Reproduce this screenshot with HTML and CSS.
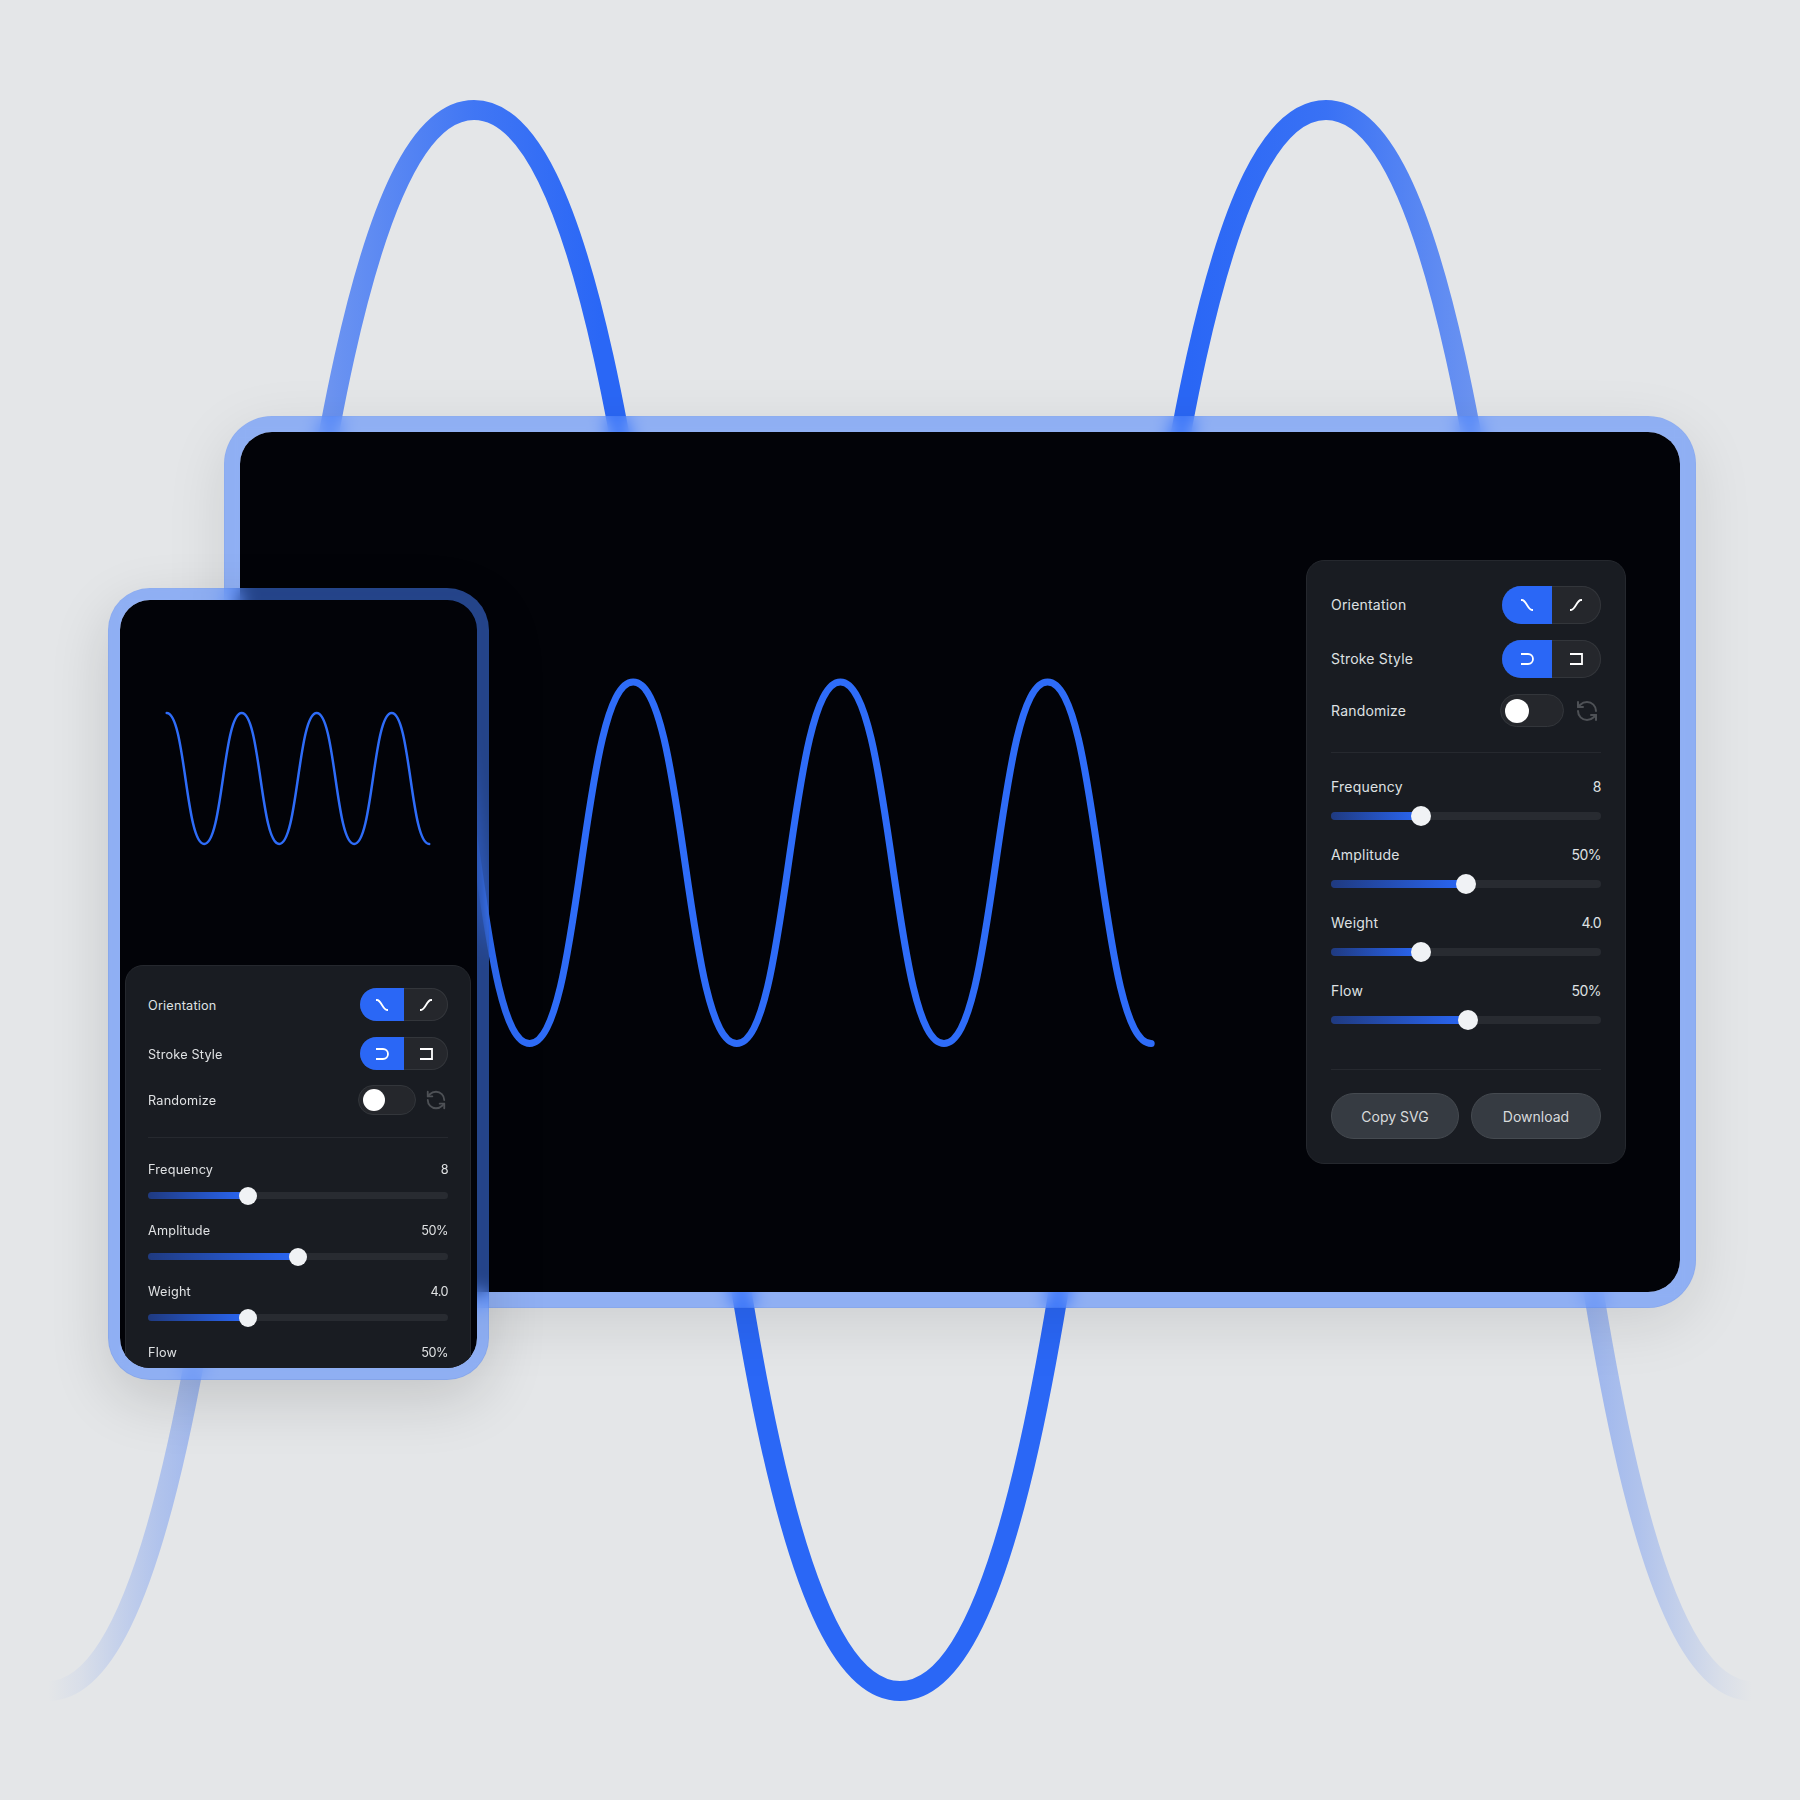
FILE: index.html
```html
<!DOCTYPE html>
<html lang="en">
<head>
    <meta charset="UTF-8">
    <meta name="viewport" content="width=device-width, initial-scale=1.0">
    <title>Wave Generator</title>
    <link rel="stylesheet" href="styles.css">
</head>
<body>

    <svg class="wave-back" viewBox="0 0 1800 1800" fill="none">
        <defs>
            <linearGradient id="waveFade" gradientUnits="userSpaceOnUse" x1="48" y1="0" x2="1752" y2="0">
                <stop offset="0" stop-color="#2a67f6" stop-opacity="0"/>
                <stop offset="0.019" stop-color="#2a67f6" stop-opacity="0.06"/>
                <stop offset="0.042" stop-color="#2a67f6" stop-opacity="0.17"/>
                <stop offset="0.066" stop-color="#2a67f6" stop-opacity="0.28"/>
                <stop offset="0.089" stop-color="#2a67f6" stop-opacity="0.36"/>
                <stop offset="0.17" stop-color="#2a67f6" stop-opacity="0.66"/>
                <stop offset="0.25" stop-color="#2a67f6" stop-opacity="0.88"/>
                <stop offset="0.324" stop-color="#2a67f6"/>
                <stop offset="0.67" stop-color="#2a67f6"/>
                <stop offset="0.75" stop-color="#2a67f6" stop-opacity="0.92"/>
                <stop offset="0.834" stop-color="#2a67f6" stop-opacity="0.66"/>
                <stop offset="0.911" stop-color="#2a67f6" stop-opacity="0.36"/>
                <stop offset="0.934" stop-color="#2a67f6" stop-opacity="0.28"/>
                <stop offset="0.958" stop-color="#2a67f6" stop-opacity="0.17"/>
                <stop offset="0.982" stop-color="#2a67f6" stop-opacity="0.06"/>
                <stop offset="1" stop-color="#2a67f6" stop-opacity="0"/>
            </linearGradient>
        </defs>
        <path d="M48 1691 C272 1691 250 110 474 110 S676 1691 900 1691 S1102 110 1326 110 S1528 1691 1752 1691" stroke="url(#waveFade)" stroke-width="20"/>
    </svg>

    <!-- desktop window -->
    <section class="frame frame-desktop">
        <svg class="wave-desktop" viewBox="0 0 1440 860" fill="none">
            <path d="M186 250 C237.8 250 237.8 611.5 289.6 611.5 S341.4 250 393.2 250 S445 611.5 496.8 611.5 S548.6 250 600.4 250 S652.2 611.5 704 611.5 S755.8 250 807.6 250 S859.4 611.5 911.2 611.5" stroke="#2e6cf8" stroke-width="7" stroke-linecap="round"/>
        </svg>

        <div class="panel">
            <div class="row">
                <span class="label">Orientation</span>
                <div class="seg">
                    <button class="seg-btn active" type="button"><svg class="seg-icon" viewBox="0 0 14 12"><path d="M1 1 H2 C6 1 8 11 12 11 H13"/></svg></button>
                    <button class="seg-btn" type="button"><svg class="seg-icon" viewBox="0 0 14 12"><path d="M1 11 H2 C6 11 8 1 12 1 H13"/></svg></button>
                </div>
            </div>
            <div class="row">
                <span class="label">Stroke Style</span>
                <div class="seg">
                    <button class="seg-btn active" type="button"><svg class="seg-icon" viewBox="0 0 14 12"><path d="M1 1 H8 A5 5 0 0 1 8 11 H1"/></svg></button>
                    <button class="seg-btn" type="button"><svg class="seg-icon" viewBox="0 0 14 12"><path d="M1 1 H13 V11 H1"/></svg></button>
                </div>
            </div>
            <div class="row">
                <span class="label">Randomize</span>
                <div class="random">
                    <div class="toggle"><span class="knob"></span></div>
                    <svg class="refresh" viewBox="0 0 24 24">
                        <path d="M21 12a9 9 0 0 0-9-9 9.75 9.75 0 0 0-6.74 2.74L3 8"/>
                        <path d="M3 3v5h5"/>
                        <path d="M3 12a9 9 0 0 0 9 9 9.75 9.75 0 0 0 6.74-2.74L21 16"/>
                        <path d="M16 16h5v5"/>
                    </svg>
                </div>
            </div>

            <hr class="line">

            <div class="sliders">
                <div class="slider">
                    <div class="slider-head"><span>Frequency</span><span class="value">8</span></div>
                    <div class="track"><div class="fill" style="width: 33.3%"><span class="thumb"></span></div></div>
                </div>
                <div class="slider">
                    <div class="slider-head"><span>Amplitude</span><span class="value">50%</span></div>
                    <div class="track"><div class="fill" style="width: 50%"><span class="thumb"></span></div></div>
                </div>
                <div class="slider">
                    <div class="slider-head"><span>Weight</span><span class="value">4.0</span></div>
                    <div class="track"><div class="fill" style="width: 33.3%"><span class="thumb"></span></div></div>
                </div>
                <div class="slider">
                    <div class="slider-head"><span>Flow</span><span class="value">50%</span></div>
                    <div class="track"><div class="fill" style="width: 50.7%"><span class="thumb"></span></div></div>
                </div>
            </div>

            <hr class="line line-end">

            <div class="actions">
                <button class="btn btn-copy" type="button">Copy SVG</button>
                <button class="btn btn-download" type="button">Download</button>
            </div>
        </div>
    </section>

    <!-- phone window -->
    <section class="frame frame-phone">
        <svg class="wave-phone" viewBox="0 0 357 365" fill="none">
            <path d="M46.7 113 C65.45 113 65.45 244 84.2 244 S102.95 113 121.7 113 S140.45 244 159.2 244 S177.95 113 196.7 113 S215.45 244 234.2 244 S252.95 113 271.7 113 S290.45 244 309.2 244" stroke="#2e6cf8" stroke-width="2.5" stroke-linecap="round"/>
        </svg>

        <div class="panel panel-small">
            <div class="row">
                <span class="label">Orientation</span>
                <div class="seg">
                    <button class="seg-btn active" type="button"><svg class="seg-icon" viewBox="0 0 14 12"><path d="M1 1 H2 C6 1 8 11 12 11 H13"/></svg></button>
                    <button class="seg-btn" type="button"><svg class="seg-icon" viewBox="0 0 14 12"><path d="M1 11 H2 C6 11 8 1 12 1 H13"/></svg></button>
                </div>
            </div>
            <div class="row">
                <span class="label">Stroke Style</span>
                <div class="seg">
                    <button class="seg-btn active" type="button"><svg class="seg-icon" viewBox="0 0 14 12"><path d="M1 1 H8 A5 5 0 0 1 8 11 H1"/></svg></button>
                    <button class="seg-btn" type="button"><svg class="seg-icon" viewBox="0 0 14 12"><path d="M1 1 H13 V11 H1"/></svg></button>
                </div>
            </div>
            <div class="row">
                <span class="label">Randomize</span>
                <div class="random">
                    <div class="toggle"><span class="knob"></span></div>
                    <svg class="refresh" viewBox="0 0 24 24">
                        <path d="M21 12a9 9 0 0 0-9-9 9.75 9.75 0 0 0-6.74 2.74L3 8"/>
                        <path d="M3 3v5h5"/>
                        <path d="M3 12a9 9 0 0 0 9 9 9.75 9.75 0 0 0 6.74-2.74L21 16"/>
                        <path d="M16 16h5v5"/>
                    </svg>
                </div>
            </div>

            <hr class="line">

            <div class="sliders">
                <div class="slider">
                    <div class="slider-head"><span>Frequency</span><span class="value">8</span></div>
                    <div class="track"><div class="fill" style="width: 33.3%"><span class="thumb"></span></div></div>
                </div>
                <div class="slider">
                    <div class="slider-head"><span>Amplitude</span><span class="value">50%</span></div>
                    <div class="track"><div class="fill" style="width: 50%"><span class="thumb"></span></div></div>
                </div>
                <div class="slider">
                    <div class="slider-head"><span>Weight</span><span class="value">4.0</span></div>
                    <div class="track"><div class="fill" style="width: 33.3%"><span class="thumb"></span></div></div>
                </div>
                <div class="slider">
                    <div class="slider-head"><span>Flow</span><span class="value">50%</span></div>
                    <div class="track"><div class="fill" style="width: 50%"><span class="thumb"></span></div></div>
                </div>
            </div>
        </div>
    </section>

</body>
</html>
```

FILE: styles.css
```css
body {
    font-family: 'Inter', 'Liberation Sans', sans-serif;
    background-color: #e4e6e8;
    color: #dfe1e3;
    margin: 0;
    width: 1800px;
    height: 1800px;
    position: relative;
    overflow: hidden;
}

.wave-back {
    position: absolute;
    left: 0;
    top: 0;
    width: 1800px;
    height: 1800px;
}

/* glass border, the wave behind it shows through blurred */
.frame {
    position: absolute;
    box-sizing: border-box;
    background-color: #020308;
    background-clip: padding-box;
    border-style: solid;
    border-color: rgba(68, 127, 253, 0.53);
    -webkit-backdrop-filter: blur(9px);
    backdrop-filter: blur(9px);
}

.frame-desktop {
    left: 224px;
    top: 416px;
    width: 1472px;
    height: 892px;
    border-width: 16px;
    border-radius: 48px;
    box-shadow: 0 16px 60px rgba(0, 0, 0, 0.1);
    display: flex;
    justify-content: flex-end;
    align-items: center;
    padding-right: 54px;
}

.frame-phone {
    left: 108px;
    top: 588px;
    width: 381px;
    height: 792px;
    border-width: 12px;
    border-radius: 42px;
    box-shadow: 0 20px 60px rgba(0, 0, 0, 0.14);
    overflow: hidden;
}

.wave-desktop {
    position: absolute;
    left: 0;
    top: 0;
    width: 1440px;
    height: 860px;
}

.wave-phone {
    display: block;
    width: 357px;
    height: 365px;
}

.panel {
    position: relative;
    box-sizing: border-box;
    width: 320px;
    padding: 25px 24px 24px;
    background-color: #191c22;
    border: 1px solid #25282e;
    border-radius: 18px;
    display: flex;
    flex-direction: column;
}

.row {
    display: flex;
    justify-content: space-between;
    align-items: center;
    margin-bottom: 16px;
}

.row:nth-child(3) {
    margin-bottom: 0;
}

.label, .slider-head {
    font-size: 14px;
    line-height: 20px;
    letter-spacing: 0.2px;
    color: #dfe1e3;
}

.value {
    letter-spacing: -0.5px;
}

.seg {
    display: flex;
    width: 99px;
    height: 38px;
    border-radius: 19px;
    overflow: hidden;
    background-color: #25272c;
    box-shadow: inset 0 0 0 1px #33363b;
}

.seg-btn {
    flex: 1;
    padding: 0;
    border: none;
    background: none;
    display: flex;
    justify-content: center;
    align-items: center;
}

.seg-btn.active {
    background-color: #2a67f6;
}

.seg-icon {
    width: 14px;
    height: 12px;
    fill: none;
    stroke: #ffffff;
    stroke-width: 1.8;
}

.random {
    display: flex;
    align-items: center;
    gap: 11px;
    padding-right: 2px;
}

.toggle {
    box-sizing: border-box;
    width: 64px;
    height: 33px;
    padding: 0 4px;
    border: 1px solid #33363b;
    border-radius: 17px;
    background-color: #25272c;
    display: flex;
    align-items: center;
}

.knob {
    width: 24px;
    height: 24px;
    border-radius: 50%;
    background-color: #ffffff;
}

.refresh {
    width: 24px;
    height: 24px;
    fill: none;
    stroke: #4e5156;
    stroke-width: 2;
    stroke-linecap: round;
    stroke-linejoin: round;
}

.line {
    width: 100%;
    height: 1px;
    margin: 25px 0 24px;
    border: none;
    background-color: #26292f;
}

.line-end {
    margin: 45px 0 23px;
}

.sliders {
    display: flex;
    flex-direction: column;
    gap: 25px;
}

.slider-head {
    display: flex;
    justify-content: space-between;
    margin-bottom: 15px;
}

.track {
    height: 8px;
    border-radius: 4px;
    background-color: #282b31;
}

.fill {
    position: relative;
    height: 100%;
    border-radius: 4px;
    background: linear-gradient(90deg, #1f3a80, #2a67f6);
}

.thumb {
    position: absolute;
    right: -10px;
    top: -6px;
    width: 20px;
    height: 20px;
    border-radius: 50%;
    background-color: #f0f2f5;
}

.actions {
    display: flex;
    gap: 12px;
}

.btn {
    height: 46px;
    border: 1px solid #454a50;
    border-radius: 23px;
    background-color: #363b42;
    color: #d8dadc;
    font-family: inherit;
    font-size: 14px;
    padding: 0;
}

.btn-copy {
    width: 128px;
}

.btn-download {
    width: 130px;
}

/* phone version of the panel */
.panel-small {
    width: 346px;
    margin-left: 5px;
    padding: 22px 22px 22px;
}

.panel-small .row:nth-child(2) {
    margin-bottom: 15px;
}

.panel-small .label, .panel-small .slider-head {
    font-size: 12.7px;
    line-height: 18px;
}

.panel-small .label {
    padding-top: 2px;
}

.panel-small .seg {
    width: 88px;
    height: 33px;
}

.panel-small .toggle {
    width: 58px;
    height: 30px;
}

.panel-small .knob {
    width: 22px;
    height: 22px;
}

.panel-small .refresh {
    width: 22px;
    height: 22px;
}

.panel-small .random {
    gap: 9px;
    padding-right: 1px;
}

.panel-small .line {
    margin: 22px 0;
}

.panel-small .sliders {
    gap: 22px;
}

.panel-small .slider-head {
    padding-top: 1px;
    margin-bottom: 13px;
}

.panel-small .track {
    height: 7px;
}

.panel-small .thumb {
    right: -9px;
    top: -5.5px;
    width: 18px;
    height: 18px;
}
```
